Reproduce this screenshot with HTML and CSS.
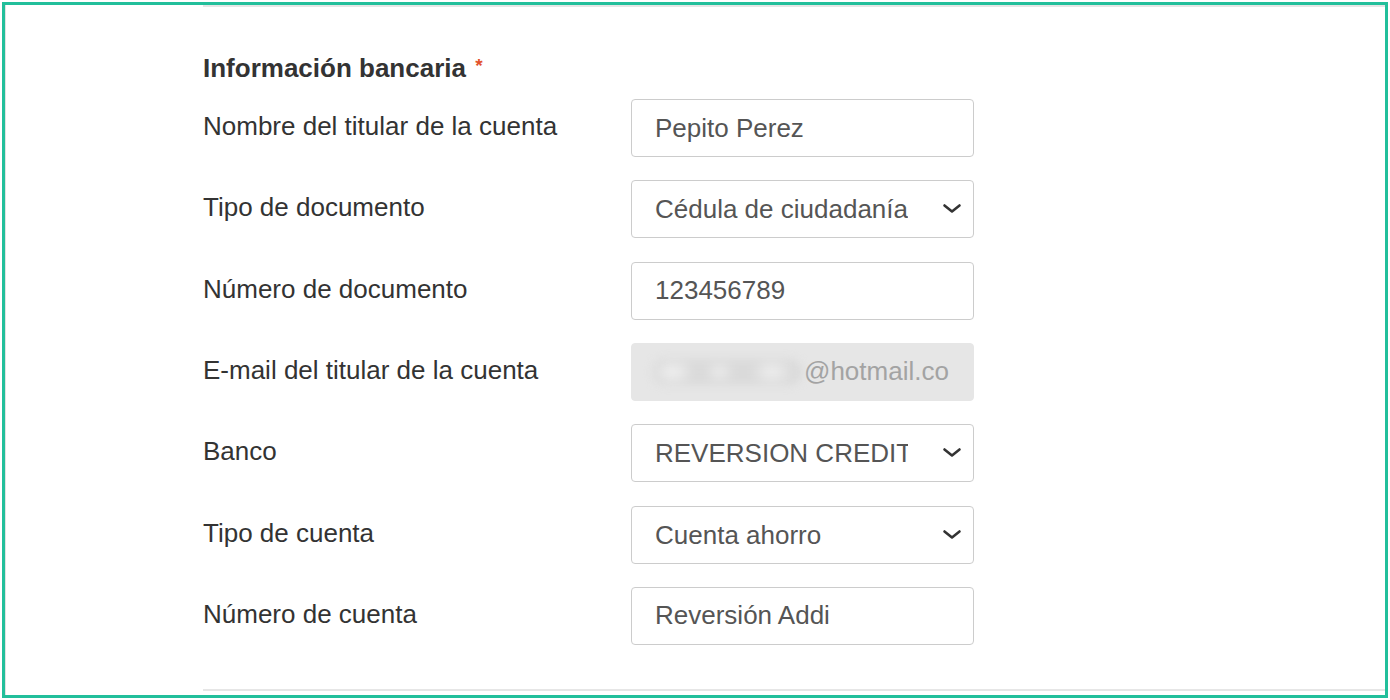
FILE: index.html
```html
<!DOCTYPE html>
<html lang="es">
<head>
<meta charset="utf-8">
<title>Información bancaria</title>
<link rel="stylesheet" href="styles.css">
</head>
<body>
<div class="frame">
  <section class="bank">
    <h2 class="title">Información bancaria <span class="req">*</span></h2>
    <div class="rows">
      <div class="row">
        <label class="lbl">Nombre del titular de la cuenta</label>
        <input class="field" type="text" value="Pepito Perez">
      </div>
      <div class="row">
        <label class="lbl">Tipo de documento</label>
        <div class="select-wrap">
          <select class="field sel"><option>Cédula de ciudadanía</option></select>
          <svg class="chev" width="20" height="11" viewBox="0 0 20 11"><path d="M2.5 2.5 L10 8.5 L17.5 2.5" fill="none" stroke="#333" stroke-width="2.6" stroke-linecap="round" stroke-linejoin="round"/></svg>
        </div>
      </div>
      <div class="row">
        <label class="lbl">Número de documento</label>
        <input class="field" type="text" value="123456789">
      </div>
      <div class="row">
        <label class="lbl">E-mail del titular de la cuenta</label>
        <div class="field disabled"><span class="blur"></span><span class="mail">@hotmail.co</span></div>
      </div>
      <div class="row">
        <label class="lbl">Banco</label>
        <div class="select-wrap">
          <select class="field sel"><option>REVERSION CREDITO</option></select>
          <svg class="chev" width="20" height="11" viewBox="0 0 20 11"><path d="M2.5 2.5 L10 8.5 L17.5 2.5" fill="none" stroke="#333" stroke-width="2.6" stroke-linecap="round" stroke-linejoin="round"/></svg>
        </div>
      </div>
      <div class="row">
        <label class="lbl">Tipo de cuenta</label>
        <div class="select-wrap">
          <select class="field sel"><option>Cuenta ahorro</option></select>
          <svg class="chev" width="20" height="11" viewBox="0 0 20 11"><path d="M2.5 2.5 L10 8.5 L17.5 2.5" fill="none" stroke="#333" stroke-width="2.6" stroke-linecap="round" stroke-linejoin="round"/></svg>
        </div>
      </div>
      <div class="row">
        <label class="lbl">Número de cuenta</label>
        <input class="field" type="text" value="Reversión Addi">
      </div>
    </div>
  </section>
</div>
</body>
</html>
```

FILE: styles.css
```css
html, body {
  margin: 0;
  height: 100%;
}
body {
  padding: 2px;
  box-sizing: border-box;
  background: #fff;
  font-family: "Liberation Sans", Arial, sans-serif;
}
.frame {
  height: 696px;
  box-sizing: border-box;
  border: 3px solid #22bf9b;
  box-shadow: inset 1px 0 0 #e2e2e2;
  padding-left: 198px;
  padding-bottom: 4px;
  display: flex;
}
.bank {
  flex: 1;
  border-top: 2px solid #e6e6e6;
  border-bottom: 2px solid #e6e6e6;
  padding-top: 46px;
}
.title {
  margin: 0;
  font-size: 26px;
  line-height: 30px;
  font-weight: bold;
  color: #333;
}
.req {
  color: #e2522c;
  font-size: 19px;
  vertical-align: top;
  position: relative;
  top: -2px;
  margin-left: 2px;
}
.rows {
  margin-top: 16px;
  display: flex;
  flex-direction: column;
  gap: 23.33px;
}
.row {
  display: grid;
  grid-template-columns: 428px 343px;
  align-items: center;
  height: 58px;
}
.lbl {
  font-size: 26px;
  line-height: 30px;
  color: #333;
  padding-bottom: 4px;
}
.field {
  box-sizing: border-box;
  width: 343px;
  height: 58px;
  margin: 0;
  border: 1px solid #ccc;
  border-radius: 4px;
  padding: 0 23px;
  font-family: "Liberation Sans", Arial, sans-serif;
  font-size: 26px;
  color: #555;
  background: #fff;
  outline: none;
}
.select-wrap {
  position: relative;
  width: 343px;
  height: 58px;
}
.sel {
  appearance: none;
  -webkit-appearance: none;
  padding-right: 65px;
  cursor: pointer;
}
.chev {
  position: absolute;
  right: 12px;
  top: 23px;
  pointer-events: none;
}
.disabled {
  display: flex;
  align-items: center;
  background: #e6e6e6;
  border-color: #e6e6e6;
  padding-left: 20px;
  overflow: hidden;
}
.blur {
  flex: none;
  width: 150px;
  height: 26px;
  margin-right: 2px;
  border-radius: 13px;
  background: radial-gradient(ellipse 22px 13px at 14% 50%, #f2f2f2 0, transparent 100%),
              radial-gradient(ellipse 16px 11px at 45% 50%, #ededed 0, transparent 100%),
              radial-gradient(ellipse 22px 13px at 80% 50%, #f0f0f0 0, transparent 100%),
              #dadada;
  filter: blur(4px);
}
.mail {
  color: #a3a3a3;
  white-space: nowrap;
}
```
